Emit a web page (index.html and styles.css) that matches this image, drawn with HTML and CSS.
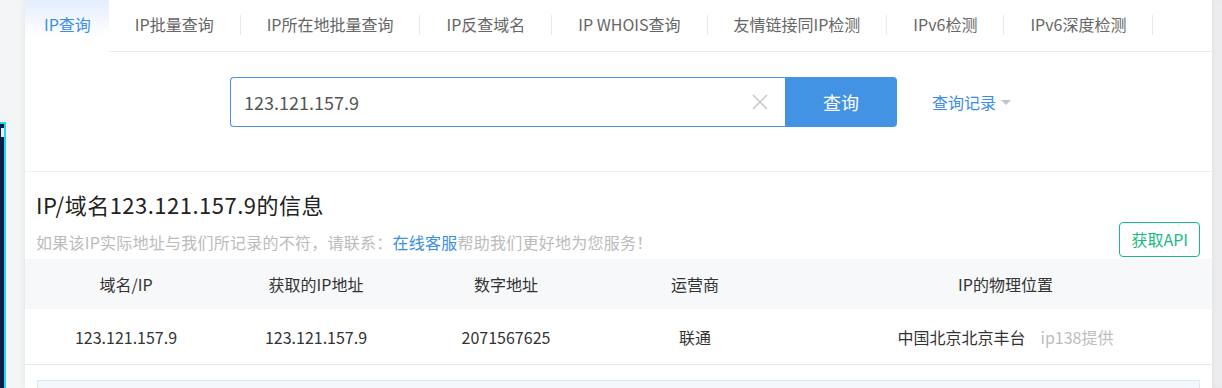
FILE: index.html
```html
<!DOCTYPE html>
<html>
<head>
    <meta charset="utf-8">
    <title>IP查询 - 查询结果</title>
    <link rel="stylesheet" href="styles.css">
</head>
<body>
    <div class="page">
        <div class="gutter"></div>

        <!-- Main white panel -->
        <div class="panel">
            <ul class="tabs">
                <li class="tab active">IP查询</li>
                <li class="tab">IP批量查询</li>
                <li class="tab">IP所在地批量查询</li>
                <li class="tab">IP反查域名</li>
                <li class="tab">IP WHOIS查询</li>
                <li class="tab">友情链接同IP检测</li>
                <li class="tab">IPv6检测</li>
                <li class="tab">IPv6深度检测</li>
            </ul>

            <!-- Search row -->
            <div class="search">
                <div class="search-box">
                    <input type="text" class="search-input" value="123.121.157.9">
                    <svg class="clear-icon" width="16" height="16" viewBox="0 0 16 16">
                        <path d="M1 1 L15 15 M15 1 L1 15" stroke="#c4c4c4" stroke-width="1.3" fill="none"/>
                    </svg>
                </div>
                <button type="button" class="search-btn">查询</button>
                <a href="#" class="history-link">查询记录<span class="caret"></span></a>
            </div>

            <!-- Result section -->
            <div class="result">
                <div class="result-head">
                    <div class="result-title">
                        <h2>IP/域名123.121.157.9的信息</h2>
                        <p>如果该IP实际地址与我们所记录的不符，请联系：<a href="#">在线客服</a>帮助我们更好地为您服务！</p>
                    </div>
                    <a href="#" class="api-btn">获取API</a>
                </div>

                <table class="info-table">
                    <colgroup>
                        <col class="c1"><col class="c2"><col class="c3"><col class="c4"><col>
                    </colgroup>
                    <thead>
                        <tr>
                            <th>域名/IP</th><th>获取的IP地址</th><th>数字地址</th><th>运营商</th><th class="loc">IP的物理位置</th>
                        </tr>
                    </thead>
                    <tbody>
                        <tr>
                            <td>123.121.157.9</td>
                            <td>123.121.157.9</td>
                            <td>2071567625</td>
                            <td>联通</td>
                            <td class="loc">中国北京北京丰台<span class="source">ip138提供</span></td>
                        </tr>
                    </tbody>
                </table>

                <div class="note-box"></div>
            </div>
        </div>

        <div class="scroll-track"></div>
    </div>

    <!-- floating side widget, mostly off screen -->
    <div class="side-widget"></div>
</body>
</html>
```

FILE: styles.css
```css
/* --- Base --- */
html, body { margin: 0; padding: 0; }
body {
    font-family: "Noto Sans CJK SC", "Noto Sans", sans-serif;
    background: #f4f5f7;
    color: #333;
    height: 388px;
    overflow: hidden;
}
a { text-decoration: none; }

.page { display: grid; grid-template-columns: 25px 1187px 1fr; height: 388px; }
.scroll-track { background: #ececef; box-shadow: inset 2px 0 3px rgba(0,0,0,0.03); }

.panel {
    background: #fff;
    box-shadow: 0 0 8px rgba(0,0,0,0.08);
    height: 388px;
    overflow: hidden;
}

/* --- Tabs --- */
.tabs {
    display: flex;
    list-style: none;
    margin: 0;
    padding: 0;
    border-bottom: 1px solid #ebebeb;
}
.tab {
    position: relative;
    height: 51px;
    line-height: 49px;
    padding: 0 27px 0 26px;
    font-size: 16px;
    color: #666;
    white-space: nowrap;
}
.tab::after { /* thin divider */
    content: "";
    position: absolute;
    right: 0; top: 15px;
    width: 1px; height: 20px;
    background: #e9e9e9;
}
.tab.active {
    padding: 0 18px 0 19px;
    height: 52px;
    margin-bottom: -1px;
    color: #3d8ee8;
    background: linear-gradient(to bottom, #e4eefc 0%, #ffffff 70%);
}
.tab.active::after { display: none; }

/* --- Search row --- */
.search {
    display: flex;
    align-items: center;
    padding: 25px 0 44px 205px;
    border-bottom: 1px solid #eeeeee;
}
.search-box {
    display: flex;
    align-items: center;
    width: 554px;
    height: 48px;
    border: 1px solid #4a90e2;
    border-right: none;
    border-radius: 4px 0 0 4px;
}
.search-input {
    flex: 1;
    border: none;
    outline: none;
    height: 46px;
    padding: 0 0 0 13px;
    font-family: inherit;
    font-size: 18px;
    color: #555;
    background: transparent;
}
.clear-icon { margin: 0 17px 0 10px; flex-shrink: 0; }
.search-btn {
    width: 112px;
    height: 50px;
    border: none;
    border-radius: 0 4px 4px 0;
    background: #4393e4;
    color: #fff;
    font-family: inherit;
    font-size: 18px;
}
.history-link {
    display: flex;
    align-items: center;
    margin-left: 35px;
    font-size: 16px;
    color: #3a8ee6;
}
.history-link .caret {
    display: inline-block;
    margin-left: 5px;
    border-left: 5px solid transparent;
    border-right: 5px solid transparent;
    border-top: 5px solid #c0c4cc;
}

/* --- Result --- */
.result-head {
    display: flex;
    justify-content: space-between;
    align-items: flex-end;
    padding: 17px 12px 2px 11px;
}
.result-title h2 {
    margin: 0;
    font-size: 22px;
    line-height: 30px;
    font-weight: normal;
    letter-spacing: 0.5px;
    color: #222;
}
.result-title p {
    margin: 11px 0 3px;
    font-size: 16px;
    line-height: 24px;
    letter-spacing: 0.25px;
    color: #bbbbbb;
}
.result-title p a { color: #3a8ee6; }
.api-btn {
    height: 33px;
    line-height: 33px;
    padding: 0 11px;
    border: 1px solid #19b983;
    border-radius: 4px;
    color: #19b983;
    font-size: 16px;
}

.info-table {
    width: 100%;
    table-layout: fixed;
    border-collapse: collapse;
    font-size: 16px;
}
.info-table col.c1 { width: 202px; }
.info-table col.c2 { width: 178px; }
.info-table col.c3 { width: 202px; }
.info-table col.c4 { width: 176px; }
.info-table th {
    height: 50px;
    padding: 0;
    background: #f7f8fa;
    font-weight: normal;
    color: #333;
}
.info-table td {
    height: 55px;
    padding: 0;
    text-align: center;
    color: #333;
    border-bottom: 1px solid #e8e8e8;
}
.info-table .loc { padding-left: 16px; }
.info-table .source { margin-left: 15px; color: #bdbdbd; }

.note-box {
    margin: 15px 12px 0;
    height: 30px;
    background: #f3f8fd;
    border: 1px solid #dfe8f1;
}

/* floating widget peeking in from the left edge */
.side-widget {
    position: fixed;
    left: -95px;
    top: 122px;
    width: 97px;
    height: 270px;
    background: #0b1e45;
    border: 2px solid #22d6ee;
}
.side-widget::before { /* bit of the widget's white label */
    content: "";
    position: absolute;
    right: 0; top: 4px;
    width: 3px; height: 9px;
    background: #e8eef8;
}
```
